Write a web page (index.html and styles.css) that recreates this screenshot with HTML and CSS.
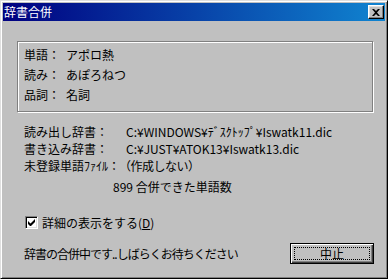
FILE: index.html
```html
<!DOCTYPE html>
<html lang="ja">
<head>
<meta charset="utf-8">
<link rel="stylesheet" href="styles.css">
</head>
<body>
<div class="window">
  <div class="titlebar">
    <span class="title">辞書合併</span>
    <button class="close" aria-label="閉じる">
      <svg width="8" height="7" viewBox="0 0 8 7"><path d="M0 0h2l2 2 2-2h2L5 3.5 8 7H6L4 5 2 7H0l3-3.5z" fill="#000"/></svg>
    </button>
  </div>
  <div class="content">
    <div class="group">
      <div class="grow"><span class="glabel">単語：</span><span>アポロ熱</span></div>
      <div class="grow"><span class="glabel">読み：</span><span>あぽろねつ</span></div>
      <div class="grow"><span class="glabel">品詞：</span><span>名詞</span></div>
    </div>
    <div class="info">
      <div class="irow"><span class="ilabel">読み出し辞書：</span><span class="ival">C:¥WINDOWS¥ﾃﾞｽｸﾄｯﾌﾟ¥Iswatk11.dic</span></div>
      <div class="irow"><span class="ilabel">書き込み辞書：</span><span class="ival">C:¥JUST¥ATOK13¥Iswatk13.dic</span></div>
      <div class="irow"><span class="ilabel">未登録単語ﾌｧｲﾙ：</span><span class="ival2">（作成しない）</span></div>
    </div>
    <div class="count">899 合併できた単語数</div>
    <label class="check"><span class="box"><svg width="7" height="7" viewBox="0 0 7 7"><path d="M0 2v3l2 2h1l4-4V0L2.5 4.5z" fill="#000"/></svg></span><span>詳細の表示をする(<u>D</u>)</span></label>
    <div class="bottom">
      <span class="status">辞書の合併中です..しばらくお待ちください</span>
      <button class="btn"><span class="focus">中止</span></button>
    </div>
  </div>
</div>
</body>
</html>
```
FILE: styles.css
```css
* { box-sizing: border-box; }
html, body { margin: 0; padding: 0; background: #c0c0c0; }
body {
  font-family: "MS UI Gothic", "Noto Sans CJK JP", sans-serif;
  font-size: 12px;
  color: #000;
}
.window {
  width: 388px;
  height: 279px;
  background: #c0c0c0;
  border: 1px solid;
  border-color: #dfdfdf #000 #000 #dfdfdf;
  box-shadow: inset 1px 1px #fff, inset -1px -1px #808080;
  padding: 2px;
  display: flex;
  flex-direction: column;
}
.titlebar {
  height: 18px;
  background: linear-gradient(to right, #000080, #1084d0);
  display: flex;
  align-items: center;
  justify-content: space-between;
  padding: 0 1px 0 1px;
}
.title {
  color: #fff;
  font-size: 12px;
  line-height: 18px;
}
.close {
  width: 16px;
  height: 14px;
  padding: 0;
  margin: 0;
  background: #c0c0c0;
  border: 1px solid;
  border-color: #fff #000 #000 #fff;
  box-shadow: inset -1px -1px #808080, inset 1px 1px #dfdfdf;
  display: flex;
  align-items: center;
  justify-content: center;
}
.content {
  flex: 1;
  display: flex;
  flex-direction: column;
  padding: 20px 11px 0 14px;
}
.group {
  height: 71px;
  border: 1px solid #808080;
  box-shadow: inset 1px 1px #fff, 1px 1px #fff;
  padding: 3px 0 0 6px;
  display: flex;
  flex-direction: column;
  margin-right: 1px;
}
.grow {
  height: 20px;
  line-height: 20px;
  display: flex;
}
.glabel { width: 42px; }
.info {
  margin-top: 11px;
  padding-left: 7px;
  display: flex;
  flex-direction: column;
}
.irow {
  height: 17px;
  line-height: 17px;
  display: flex;
}
.ilabel { width: 102px; }
.ival2 { margin-left: -7px; letter-spacing: -0.5px; }
.count {
  margin-top: 4px;
  height: 17px;
  line-height: 17px;
  padding-left: 96px;
}
.check {
  margin-top: 19px;
  margin-left: 8px;
  display: flex;
  align-items: center;
  gap: 4px;
  height: 16px;
}
.box {
  width: 13px;
  height: 13px;
  background: #fff;
  border: 1px solid;
  border-color: #808080 #fff #fff #808080;
  box-shadow: inset 1px 1px #000, inset -1px -1px #dfdfdf;
  display: flex;
  align-items: center;
  justify-content: center;
}
.bottom {
  margin-top: 13px;
  display: flex;
  align-items: center;
  justify-content: space-between;
}
.status { padding-left: 7px; letter-spacing: -1px; }
.btn {
  width: 84px;
  height: 21px;
  margin: 0;
  font: inherit;
  background: #c0c0c0;
  border: 1px solid #000;
  box-shadow: inset 1px 1px #fff, inset -1px -1px #404040, inset -2px -2px #808080;
  display: flex;
  align-items: stretch;
  padding: 3px;
}
.focus {
  flex: 1;
  border: 1px dotted #000;
  display: flex;
  align-items: center;
  justify-content: center;
  line-height: 1;
}
```
